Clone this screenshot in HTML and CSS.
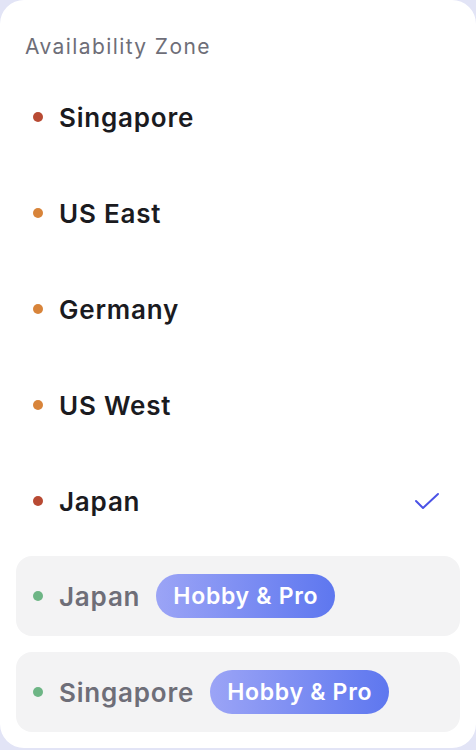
FILE: index.html
```html
<!DOCTYPE html>
<html lang="en">
<head>
  <meta charset="UTF-8">
  <meta name="viewport" content="width=device-width, initial-scale=1.0">
  <title>Availability Zone</title>
  <link rel="stylesheet" href="styles.css">
</head>
<body>
  <div class="zone-card">
    <div class="zone-title">Availability Zone</div>
    <ul class="zone-list">
      <li class="zone-row">
        <span class="dot dot-red"></span>
        <span class="zone-name">Singapore</span>
      </li>
      <li class="zone-row">
        <span class="dot dot-orange"></span>
        <span class="zone-name">US East</span>
      </li>
      <li class="zone-row">
        <span class="dot dot-orange"></span>
        <span class="zone-name">Germany</span>
      </li>
      <li class="zone-row">
        <span class="dot dot-orange"></span>
        <span class="zone-name">US West</span>
      </li>
      <li class="zone-row selected">
        <span class="dot dot-red"></span>
        <span class="zone-name">Japan</span>
        <svg class="check" width="26" height="18" viewBox="0 0 26 18">
          <path d="M2 9 L9 16 L24 2" fill="none" stroke="#4b53e6" stroke-width="2" stroke-linecap="round" stroke-linejoin="round"/>
        </svg>
      </li>
      <li class="zone-row locked">
        <span class="dot dot-green"></span>
        <span class="zone-name">Japan</span>
        <span class="badge">Hobby &amp; Pro</span>
      </li>
      <li class="zone-row locked">
        <span class="dot dot-green"></span>
        <span class="zone-name">Singapore</span>
        <span class="badge">Hobby &amp; Pro</span>
      </li>
    </ul>
  </div>
</body>
</html>
```

FILE: styles.css
```css
html, body {
  margin: 0;
  background-color: #e2e4f6;
  font-family: "Inter", "Noto Sans", sans-serif;
}

.zone-card {
  width: 476px;
  height: 748px;
  box-sizing: border-box;
  background-color: white;
  border-radius: 24px;
  padding: 35px 16px 0 16px;
}

.zone-title {
  font-size: 21px;
  line-height: 24px;
  letter-spacing: 1.4px;
  color: #6e6e78;
  padding-left: 9px;
}

.zone-list {
  list-style: none;
  margin: 10px 0 0 0;
  padding: 0;
  display: flex;
  flex-direction: column;
}

.zone-row {
  display: flex;
  align-items: center;
  height: 96px;
  padding: 0 20px 0 17px;
  font-size: 26px;
  font-weight: 600;
  letter-spacing: 0.8px;
  color: #1b1b1f;
}

.zone-row:nth-child(5) {
  margin-bottom: 7px;
}

.dot {
  width: 10px;
  height: 10px;
  border-radius: 50%;
  margin-right: 16px;
  flex-shrink: 0;
}

.dot-red {
  background-color: #b84a33;
}

.dot-orange {
  background-color: #d8843a;
}

.dot-green {
  background-color: #6db585;
}

.check {
  margin-left: auto;
}

.locked {
  height: 80px;
  background-color: #f3f3f4;
  border-radius: 16px;
  color: #6e6e78;
  margin-bottom: 16px;
}

.badge {
  margin-left: 16px;
  height: 44px;
  line-height: 44px;
  padding: 0 17px;
  border-radius: 22px;
  color: white;
  font-size: 23px;
  font-weight: 600;
  letter-spacing: 0.7px;
  background: linear-gradient(to right, #9ba4f6, #5e77ef);
}
```
